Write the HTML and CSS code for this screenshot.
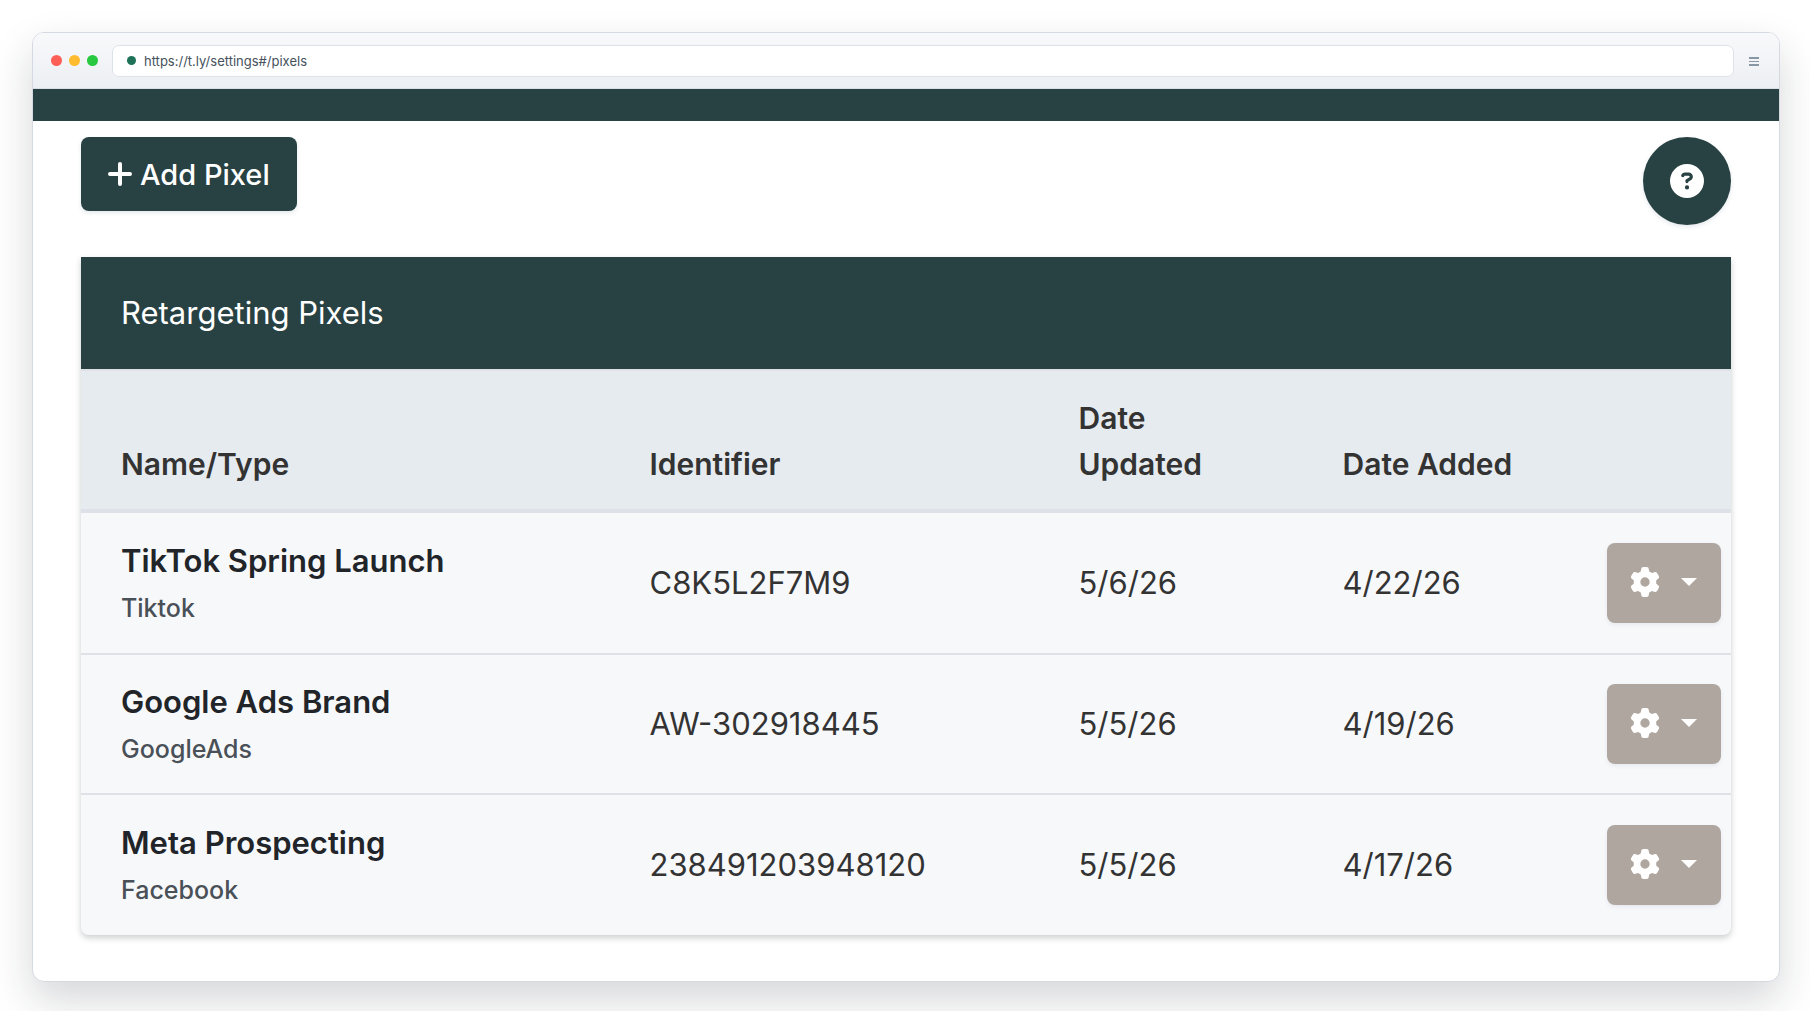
FILE: index.html
```html
<!DOCTYPE html>
<html lang="en">
<head>
<meta charset="utf-8">
<meta name="viewport" content="width=device-width, initial-scale=1">
<title>Retargeting Pixels</title>
<link rel="stylesheet" href="styles.css">
</head>
<body>
<svg class="sprite" aria-hidden="true">
  <symbol id="gear" viewBox="0 0 512 512"><path d="M495.9 166.6c3.2 8.7 .5 18.4-6.4 24.6l-43.3 39.4c1.1 8.3 1.7 16.8 1.7 25.4s-.6 17.1-1.7 25.4l43.3 39.4c6.9 6.2 9.6 15.9 6.4 24.6c-4.4 11.9-9.7 23.3-15.8 34.3l-4.7 8.1c-6.6 11-14 21.4-22.1 31.2c-5.9 7.2-15.7 9.6-24.5 6.8l-55.7-17.7c-13.4 10.3-28.2 18.9-44 25.4l-12.5 57.1c-2 9.1-9 16.3-18.2 17.8c-13.8 2.3-28 3.5-42.5 3.5s-28.7-1.2-42.5-3.5c-9.2-1.5-16.2-8.7-18.2-17.8l-12.5-57.1c-15.8-6.5-30.6-15.1-44-25.4L83.1 425.9c-8.8 2.8-18.6 .3-24.5-6.8c-8.1-9.8-15.5-20.2-22.1-31.2l-4.7-8.1c-6.1-11-11.4-22.4-15.8-34.3c-3.2-8.7-.5-18.4 6.4-24.6l43.3-39.4C64.6 273.1 64 264.6 64 256s.6-17.1 1.7-25.4L22.4 191.2c-6.9-6.2-9.6-15.9-6.4-24.6c4.4-11.9 9.7-23.3 15.8-34.3l4.7-8.1c6.6-11 14-21.4 22.1-31.2c5.9-7.2 15.7-9.6 24.5-6.8l55.7 17.7c13.4-10.3 28.2-18.9 44-25.4l12.5-57.1c2-9.1 9-16.3 18.2-17.8C227.3 1.2 241.5 0 256 0s28.7 1.2 42.5 3.5c9.2 1.5 16.2 8.7 18.2 17.8l12.5 57.1c15.8 6.5 30.6 15.1 44 25.4l55.7-17.7c8.8-2.8 18.6-.3 24.5 6.8c8.1 9.8 15.5 20.2 22.1 31.2l4.7 8.1c6.1 11 11.4 22.4 15.8 34.3zM256 336a80 80 0 1 0 0-160 80 80 0 1 0 0 160z"/></symbol>
</svg>
<div class="window">
  <header class="chrome">
    <div class="lights"><span class="light red"></span><span class="light amber"></span><span class="light green"></span></div>
    <label class="address"><span class="secure"></span><input class="url" type="text" aria-label="Address" value="https://t.ly/settings#/pixels"></label>
    <button class="menu" type="button" aria-label="Menu"><svg width="10" height="9" viewBox="0 0 10 9"><path d="M0 0h10v2H0zM0 4h10v1H0zM0 7h10v2H0z"/></svg></button>
  </header>
  <div class="topbar"></div>
  <main class="content">
    <div class="actions">
      <button class="add" type="button"><svg width="24" height="24" viewBox="0 0 24 24"><path d="M12 2v20M2 12h20"/></svg>Add Pixel</button>
      <button class="help" type="button" aria-label="Help"><svg width="34" height="34" viewBox="0 0 512 512"><path d="M256 512A256 256 0 1 0 256 0a256 256 0 1 0 0 512zM169.8 165.3c7.9-22.3 29.1-37.3 52.8-37.3h58.3c34.9 0 63.1 28.3 63.1 63.1c0 22.6-12.1 43.5-31.7 54.8L280 264.4c-.2 13-10.9 23.6-24 23.6c-13.3 0-24-10.7-24-24V250.5c0-8.6 4.6-16.5 12.1-20.8l44.3-25.4c4.7-2.7 7.6-7.7 7.6-13.1c0-8.4-6.8-15.1-15.1-15.1H222.6c-3.4 0-6.4 2.1-7.5 5.3l-.4 1.2c-4.4 12.5-18.2 19-30.6 14.6s-19-18.2-14.6-30.6l.4-1.2zM224 352a32 32 0 1 1 64 0 32 32 0 1 1 -64 0z"/></svg></button>
    </div>
    <section class="card">
      <h1 class="title">Retargeting Pixels</h1>
      <table class="pixels">
        <colgroup><col class="c-name"><col class="c-id"><col class="c-updated"><col class="c-added"><col class="c-menu"></colgroup>
        <thead>
          <tr><th scope="col">Name/Type</th><th scope="col">Identifier</th><th scope="col">Date<br>Updated</th><th scope="col">Date Added</th><td></td></tr>
        </thead>
        <tbody>
          <tr>
            <td><div class="name">TikTok Spring Launch</div><div class="type">Tiktok</div></td>
            <td>C8K5L2F7M9</td><td>5/6/26</td><td>4/22/26</td>
            <td class="options"><button class="gear" type="button" aria-label="Options for TikTok Spring Launch"><svg width="30" height="30"><use href="#gear"/></svg><span class="caret"></span></button></td>
          </tr>
          <tr>
            <td><div class="name">Google Ads Brand</div><div class="type">GoogleAds</div></td>
            <td>AW-302918445</td><td>5/5/26</td><td>4/19/26</td>
            <td class="options"><button class="gear" type="button" aria-label="Options for Google Ads Brand"><svg width="30" height="30"><use href="#gear"/></svg><span class="caret"></span></button></td>
          </tr>
          <tr>
            <td><div class="name">Meta Prospecting</div><div class="type">Facebook</div></td>
            <td>238491203948120</td><td>5/5/26</td><td>4/17/26</td>
            <td class="options"><button class="gear" type="button" aria-label="Options for Meta Prospecting"><svg width="30" height="30"><use href="#gear"/></svg><span class="caret"></span></button></td>
          </tr>
        </tbody>
      </table>
    </section>
  </main>
</div>
</body>
</html>
```
FILE: styles.css
```css
* { box-sizing: border-box; }
body {
  margin: 0;
  padding: 32px 30px 29px 32px;
  background: #fff;
  color: #333;
  font-family: Inter, "Liberation Sans", sans-serif;
  overflow-x: hidden;
}
button { border: 0; padding: 0; font: inherit; color: inherit; cursor: pointer; }
svg { display: block; fill: currentColor; }
.sprite { position: absolute; width: 0; height: 0; }

.window {
  border: 1px solid #d5dae2;
  border-radius: 12px;
  background: #fff;
  box-shadow: 0 18px 40px rgba(26, 35, 43, 0.18);
  overflow: hidden;
}
.chrome {
  display: flex;
  align-items: center;
  height: 56px;
  padding: 0 20px 0 18px;
  border-bottom: 1px solid #d9dee5;
  background: linear-gradient(#f8f9fb, #eceff3);
}
.lights { display: flex; gap: 7px; margin-right: 14px; }
.light { width: 11px; height: 11px; border-radius: 50%; }
.red { background: #ff5f57; }
.amber { background: #febc2e; }
.green { background: #28c840; }
.address {
  display: flex;
  align-items: center;
  gap: 8px;
  flex: 1;
  height: 32px;
  padding: 0 14px;
  border: 1px solid #dde2e9;
  border-radius: 7px;
  background: #fff;
}
.secure { width: 9px; height: 9px; border-radius: 50%; background: #1f7258; }
.url {
  flex: 1;
  min-width: 0;
  border: 0;
  padding: 1px 0 0;
  background: none;
  color: #46525c;
  font: 13px/16px Inter, "Liberation Sans", sans-serif;
}
.menu { margin-left: 15px; padding-top: 2px; background: none; color: #8797a3; }

.topbar { height: 32px; background: #284143; }
.content { padding: 16px 48px 46px; }
.actions { display: flex; justify-content: space-between; align-items: flex-start; }
.add {
  display: flex;
  align-items: center;
  gap: 8px;
  height: 74px;
  padding: 0 27px;
  border-radius: 8px;
  background: #284143;
  color: #fff;
  font-size: 29px;
  font-weight: 500;
  box-shadow: 0 2px 4px rgba(40, 65, 100, 0.12);
}
.add svg { fill: none; stroke: #fff; stroke-width: 4; stroke-linecap: round; }
.help {
  display: grid;
  place-items: center;
  width: 88px;
  height: 88px;
  border-radius: 50%;
  background: #284143;
  color: #fff;
  box-shadow: 0 2px 4px rgba(40, 65, 100, 0.12);
}

.card {
  margin-top: 32px;
  border-radius: 0 0 8px 8px;
  background: #f7f8fa;
  box-shadow: 0 3px 6px rgba(20, 40, 30, 0.22);
}
.title {
  margin: 0;
  padding: 32px 40px;
  background: #284143;
  color: #fff;
  font-size: 31px;
  font-weight: 400;
  line-height: 48px;
}
.pixels { width: 100%; table-layout: fixed; border-spacing: 0; font-size: 31px; line-height: 46px; }
.c-name { width: 33%; }
.c-id { width: 26%; }
.c-updated { width: 16%; }
.c-added { width: 17%; }
.c-menu { width: 8%; }
.pixels th, .pixels td { padding: 0 0 0 24px; text-align: left; }
.pixels tr > :first-child { padding-left: 40px; }
.pixels thead th, .pixels thead td {
  padding-top: 24px;
  padding-bottom: 22px;
  border-top: 2px solid #dee2e6;
  border-bottom: 4px solid #dee2e8;
  background: #e6ebef;
  font-size: 30px;
  font-weight: 600;
  vertical-align: bottom;
}
.pixels tbody td { height: 140px; border-bottom: 2px solid #dee1e8; vertical-align: middle; }
.pixels tbody tr:first-child td { height: 142px; }
.pixels tbody tr:last-child td { border-bottom: 0; }
.pixels tbody td:first-child { padding-top: 4px; }
.name { color: #212529; font-weight: 600; }
.type { color: #495057; font-size: 25px; font-weight: 500; line-height: 48px; }
.pixels .options { padding: 0 10px 0 0; }
.gear {
  display: flex;
  align-items: center;
  justify-content: space-between;
  width: 114px;
  height: 80px;
  margin-left: auto;
  padding: 0 24px 2px 23px;
  border-radius: 8px;
  background: #aea69f;
  color: #fff;
  box-shadow: 0 2px 4px rgba(40, 65, 100, 0.08);
}
.caret { border: 8px solid transparent; border-top-color: #fff; border-bottom: 0; }
```
